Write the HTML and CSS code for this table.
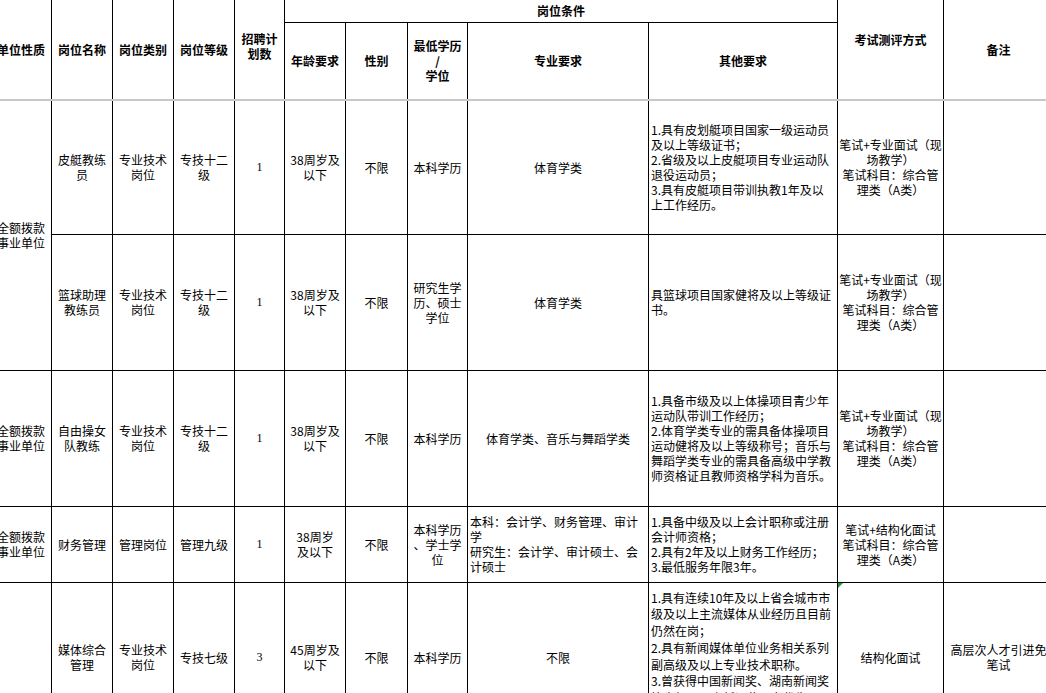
FILE: index.html
```html
<!DOCTYPE html>
<html lang="zh-CN">
<head>
<meta charset="utf-8">
<title>岗位表</title>
<link rel="stylesheet" href="styles.css">
</head>
<body>
<div class="sheet">
<table class="grid">
<colgroup>
<col class="c-unit"><col class="c-name"><col class="c-type"><col class="c-level"><col class="c-num">
<col class="c-age"><col class="c-sex"><col class="c-edu"><col class="c-major"><col class="c-other">
<col class="c-exam"><col class="c-note">
</colgroup>
<thead>
<tr class="h1">
<th rowspan="2" class="hb">单位性质</th>
<th rowspan="2" class="hb">岗位名称</th>
<th rowspan="2" class="hb">岗位类别</th>
<th rowspan="2" class="hb">岗位等级</th>
<th rowspan="2" class="hb plan">招聘计<br>划数</th>
<th colspan="5">岗位条件</th>
<th rowspan="2" class="hb exam-h">考试测评方式</th>
<th rowspan="2" class="hb">备注</th>
</tr>
<tr class="h2">
<th class="hb">年龄要求</th>
<th class="hb">性别</th>
<th class="hb">最低学历<br>/<br>学位</th>
<th class="hb">专业要求</th>
<th class="hb">其他要求</th>
</tr>
</thead>
<tbody>
<tr class="r1">
<td rowspan="2">全额拨款<br>事业单位</td>
<td>皮艇教练<br>员</td>
<td>专业技术<br>岗位</td>
<td>专技十二<br>级</td>
<td class="num">1</td>
<td>38周岁及<br>以下</td>
<td>不限</td>
<td>本科学历</td>
<td>体育学类</td>
<td class="left">1.具有皮划艇项目国家一级运动员<br>及以上等级证书；<br>2.省级及以上皮艇项目专业运动队<br>退役运动员；<br>3.具有皮艇项目带训执教1年及以<br>上工作经历。</td>
<td>笔试+专业面试（现<br>场教学）<br>笔试科目：综合管<br>理类（A类）</td>
<td></td>
</tr>
<tr class="r2">
<td>篮球助理<br>教练员</td>
<td>专业技术<br>岗位</td>
<td>专技十二<br>级</td>
<td class="num">1</td>
<td>38周岁及<br>以下</td>
<td>不限</td>
<td>研究生学<br>历、硕士<br>学位</td>
<td>体育学类</td>
<td class="left">具篮球项目国家健将及以上等级证<br>书。</td>
<td>笔试+专业面试（现<br>场教学）<br>笔试科目：综合管<br>理类（A类）</td>
<td></td>
</tr>
<tr class="r3">
<td>全额拨款<br>事业单位</td>
<td>自由操女<br>队教练</td>
<td>专业技术<br>岗位</td>
<td>专技十二<br>级</td>
<td class="num">1</td>
<td>38周岁及<br>以下</td>
<td>不限</td>
<td>本科学历</td>
<td>体育学类、音乐与舞蹈学类</td>
<td class="left">1.具备市级及以上体操项目青少年<br>运动队带训工作经历；<br>2.体育学类专业的需具备体操项目<br>运动健将及以上等级称号；音乐与<br>舞蹈学类专业的需具备高级中学教<br>师资格证且教师资格学科为音乐。</td>
<td>笔试+专业面试（现<br>场教学）<br>笔试科目：综合管<br>理类（A类）</td>
<td></td>
</tr>
<tr class="r4">
<td>全额拨款<br>事业单位</td>
<td>财务管理</td>
<td>管理岗位</td>
<td>管理九级</td>
<td class="num">1</td>
<td>38周岁<br>及以下</td>
<td>不限</td>
<td>本科学历<br>、学士学<br>位</td>
<td class="left">本科：会计学、财务管理、审计<br>学<br>研究生：会计学、审计硕士、会<br>计硕士</td>
<td class="left">1.具备中级及以上会计职称或注册<br>会计师资格；<br>2.具有2年及以上财务工作经历；<br>3.最低服务年限3年。</td>
<td>笔试+结构化面试<br>笔试科目：综合管<br>理类（A类）</td>
<td></td>
</tr>
<tr class="r5">
<td></td>
<td>媒体综合<br>管理</td>
<td>专业技术<br>岗位</td>
<td>专技七级</td>
<td class="num">3</td>
<td>45周岁及<br>以下</td>
<td>不限</td>
<td>本科学历</td>
<td>不限</td>
<td class="left tall"><div class="clip">1.具有连续10年及以上省会城市市<br>级及以上主流媒体从业经历且目前<br>仍然在岗；<br>2.具有新闻媒体单位业务相关系列<br>副高级及以上专业技术职称。<br>3.曾获得中国新闻奖、湖南新闻奖<br>等省级及以上新闻奖项者优先；<br>4.具有较强的文字功底和策划<br>组织能力。</div></td>
<td class="flag">结构化面试<span class="tri"></span></td>
<td>高层次人才引进免<br>笔试</td>
</tr>
</tbody>
</table>
</div>
</body>
</html>
```
FILE: styles.css
```css
html, body {
  margin: 0;
  padding: 0;
  background: #fff;
}
body {
  width: 1046px;
  height: 693px;
  overflow: hidden;
  font-family: "Noto Sans CJK SC", "Noto Sans", sans-serif;
  font-size: 12px;
  color: #000;
}
.sheet {
  margin-left: -10px;
}
.grid {
  border-collapse: collapse;
  table-layout: fixed;
  width: 1063px;
}
.c-unit { width: 61px; }
.c-name { width: 61px; }
.c-type { width: 61px; }
.c-level { width: 61px; }
.c-num { width: 50px; }
.c-age { width: 61px; }
.c-sex { width: 62px; }
.c-edu { width: 60px; }
.c-major { width: 181px; }
.c-other { width: 189px; }
.c-exam { width: 106px; }
.c-note { width: 110px; }

.grid th,
.grid td {
  border: 1px solid #000;
  padding: 0 1px;
  text-align: center;
  vertical-align: middle;
  line-height: 15px;
  overflow: hidden;
  white-space: nowrap;
}
.grid th {
  font-weight: bold;
  line-height: 15px;
}
.h1 th {
  border-top: none;
}
.grid th.hb {
  border-bottom: 2px solid #c8c8c8;
}
.h1 { height: 22px; }
.h2 { height: 78px; }
.r1 { height: 134px; }
.r2 { height: 136px; }
.r3 { height: 136px; }
.r4 { height: 76px; }
.r5 { height: 150px; }

.grid th.exam-h {
  padding-bottom: 20px;
}
.grid th.plan {
  padding-bottom: 7px;
}
.grid td.left {
  text-align: left;
  padding-left: 2px;
}
.grid td.num {
  font-family: "Liberation Serif", serif;
  font-size: 12px;
}
.grid td.tall {
  line-height: 16.8px;
  vertical-align: top;
  padding-top: 7px;
}
.clip {
  height: 140px;
  overflow: hidden;
}
.grid td.flag {
  position: relative;
}
.tri {
  position: absolute;
  left: 0;
  top: 0;
  width: 0;
  height: 0;
  border-top: 5px solid #1a9a3a;
  border-right: 5px solid transparent;
}
```
